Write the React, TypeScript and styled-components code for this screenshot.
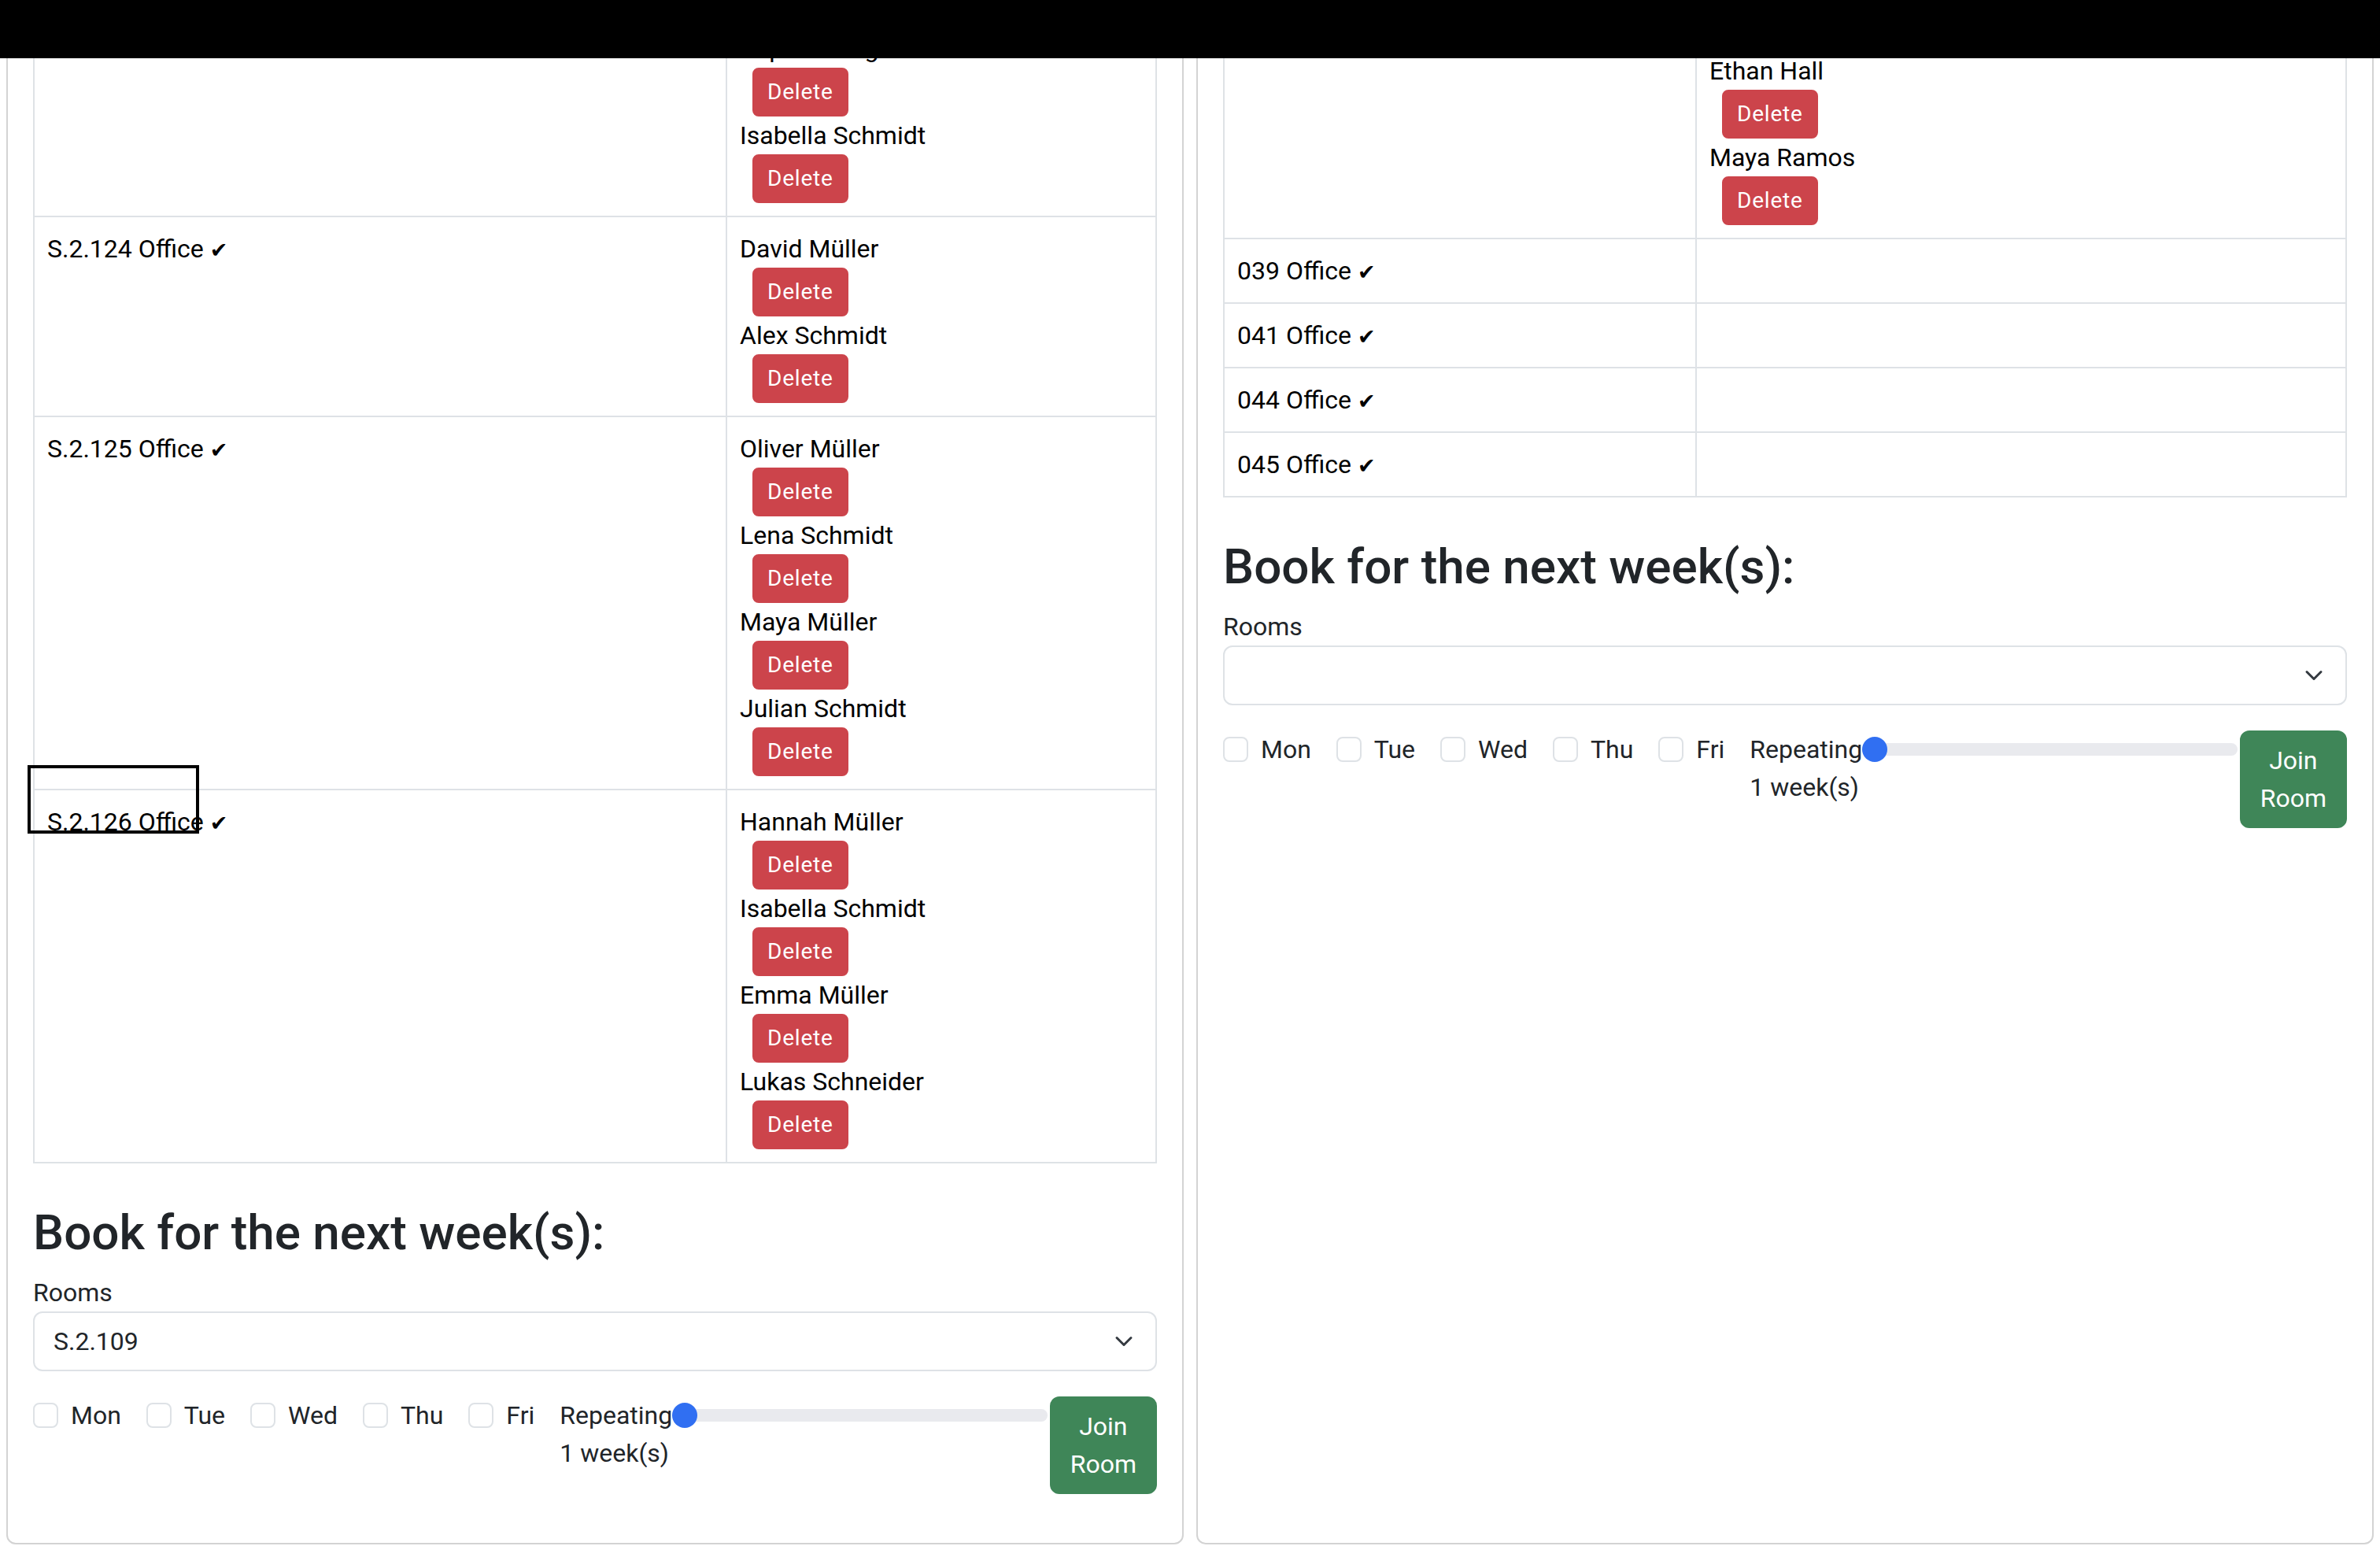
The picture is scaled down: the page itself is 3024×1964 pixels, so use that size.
import React from "react";
import styled, { createGlobalStyle } from "styled-components";

type Room = { name: string; people: string[] };

const leftRooms: Room[] = [
  { name: "S.2.122 Office", people: [] },
  { name: "S.2.123 Office", people: ["Lukas Wagner", "Sophie Jung", "Isabella Schmidt"] },
  { name: "S.2.124 Office", people: ["David Müller", "Alex Schmidt"] },
  {
    name: "S.2.125 Office",
    people: ["Oliver Müller", "Lena Schmidt", "Maya Müller", "Julian Schmidt"]
  },
  {
    name: "S.2.126 Office",
    people: ["Hannah Müller", "Isabella Schmidt", "Emma Müller", "Lukas Schneider"]
  }
];

const rightRooms: Room[] = [
  { name: "038 Office", people: ["Noah Becker", "Lea Fischer", "Ethan Hall", "Maya Ramos"] },
  { name: "039 Office", people: [] },
  { name: "041 Office", people: [] },
  { name: "044 Office", people: [] },
  { name: "045 Office", people: [] }
];

const days = ["Mon", "Tue", "Wed", "Thu", "Fri"];

const GlobalStyle = createGlobalStyle`
  * { box-sizing: border-box; }
  html, body {
    margin: 0;
    padding: 0;
    overflow: hidden;
    background: #fff;
  }
  body {
    font-family: Roboto, "Liberation Sans", Arial, sans-serif;
    font-size: 32px;
    line-height: 1.5;
    color: #212529;
  }
`;

const Screen = styled.div`
  display: flex;
  flex-direction: column;
  height: 100vh;
`;

const TopBar = styled.div`
  flex: 0 0 74px;
  background: #000;
`;

// the page is scrolled down, the viewport only shows part of it
const Viewport = styled.div`
  flex: 1;
  min-height: 0;
  overflow: hidden;
`;

const Page = styled.div<{ $scroll: number }>`
  display: flex;
  align-items: stretch;
  margin-top: ${({ $scroll }) => -$scroll}px;
`;

const Column = styled.div`
  flex: 1 1 0;
  min-width: 0;
  padding: 0 8px;
  display: flex;
  flex-direction: column;
`;

const Card = styled.div`
  flex: 1;
  border: 2px solid #d3d3d3;
  border-radius: 12px;
  padding: 32px;
  background: #fff;
`;

const RoomTable = styled.table`
  width: 100%;
  border-collapse: collapse;
  table-layout: fixed;
  margin-bottom: 47px;
  color: #000;
`;

const Col = styled.col<{ $width?: number }>`
  width: ${({ $width }) => ($width ? `${$width}px` : "auto")};
`;

const Cell = styled.td`
  position: relative;
  border: 2px solid #dee2e6;
  padding: 16px;
  vertical-align: top;
`;

const CheckMark = styled.span`
  font-family: "DejaVu Sans", sans-serif;
  font-size: 27px;
`;

const PersonList = styled.div`
  display: flex;
  flex-direction: column;
  align-items: flex-start;
`;

const PersonName = styled.div`
  line-height: 48px;
`;

const DeleteButton = styled.button`
  margin-left: 16px;
  padding: 8px 17px;
  font-family: inherit;
  font-size: 28px;
  letter-spacing: 0.8px;
  line-height: 42px;
  color: #fff;
  background: #cc444b;
  border: 2px solid #cc444b;
  border-radius: 8px;
`;

const DragMarker = styled.div`
  position: absolute;
  top: -32px;
  left: -9px;
  width: 218px;
  height: 87px;
  border: 4px solid #000;
  pointer-events: none;
`;

const Heading = styled.h2`
  margin: 0 0 13px;
  padding-top: 3px;
  font-size: 62px;
  font-weight: 500;
  line-height: 76.8px;
  color: #212529;
`;

const FieldLabel = styled.label`
  display: block;
  line-height: 48px;
`;

const SelectBox = styled.div`
  height: 76px;
  margin-bottom: 32px;
  padding: 0 24px;
  display: flex;
  align-items: center;
  justify-content: space-between;
  border: 2px solid #dee2e6;
  border-radius: 12px;
  color: #212529;
`;

const Chevron = styled.svg`
  margin-right: 4px;
  flex-shrink: 0;
`;

const FormRow = styled.div`
  display: flex;
  align-items: flex-start;
  margin-bottom: 30px;
`;

const DayCheck = styled.label`
  display: flex;
  align-items: flex-start;
  gap: 16px;
  margin-right: 32px;
  line-height: 48px;
  white-space: nowrap;
`;

const DayBox = styled.input`
  appearance: none;
  -webkit-appearance: none;
  width: 32px;
  height: 32px;
  margin: 8px 0 0;
  flex-shrink: 0;
  border: 2px solid #dee2e6;
  border-radius: 8px;
  background: #fff;
`;

const Repeat = styled.div`
  flex: 1;
  min-width: 0;
  display: flex;
  flex-direction: column;
`;

const RepeatLine = styled.div`
  display: flex;
  align-items: center;
  height: 48px;
  white-space: nowrap;
`;

const WeeksText = styled.div`
  line-height: 48px;
`;

const Range = styled.input`
  -webkit-appearance: none;
  appearance: none;
  flex: 1;
  min-width: 0;
  height: 32px;
  margin: 0;
  padding: 0;
  background: transparent;

  &::-webkit-slider-runnable-track {
    height: 16px;
    border-radius: 16px;
    background: #e9eaee;
  }

  &::-webkit-slider-thumb {
    -webkit-appearance: none;
    width: 32px;
    height: 32px;
    margin-top: -8px;
    border: 0;
    border-radius: 50%;
    background: #306ff2;
  }
`;

const JoinButton = styled.button`
  width: min-content;
  margin-left: 3px;
  padding: 12px 24px;
  font-family: inherit;
  font-size: 32px;
  line-height: 48px;
  text-align: center;
  color: #fff;
  background: #3f8658;
  border: 2px solid #3f8658;
  border-radius: 12px;
`;

function Rooms({ rooms, firstCol, marked }: { rooms: Room[]; firstCol: number; marked?: string }) {
  return (
    <RoomTable>
      <colgroup>
        <Col $width={firstCol} />
        <Col />
      </colgroup>
      <tbody>
        {rooms.map((room) => (
          <tr key={room.name}>
            <Cell>
              {room.name} <CheckMark>✔</CheckMark>
              {marked === room.name && <DragMarker />}
            </Cell>
            <Cell>
              <PersonList>
                {room.people.map((p, i) => (
                  <React.Fragment key={p + i}>
                    <PersonName>{p}</PersonName>
                    <DeleteButton>Delete</DeleteButton>
                  </React.Fragment>
                ))}
              </PersonList>
            </Cell>
          </tr>
        ))}
      </tbody>
    </RoomTable>
  );
}

function BookingForm({ selected }: { selected: string }) {
  return (
    <>
      <Heading>Book for the next week(s):</Heading>
      <FieldLabel>Rooms</FieldLabel>
      <SelectBox>
        <span>{selected}</span>
        <Chevron width="24" height="24" viewBox="0 0 16 16">
          <path
            d="m2 5 6 6 6-6"
            fill="none"
            stroke="#343a40"
            strokeWidth="2"
            strokeLinecap="round"
            strokeLinejoin="round"
          />
        </Chevron>
      </SelectBox>
      <FormRow>
        {days.map((d) => (
          <DayCheck key={d}>
            <DayBox type="checkbox" />
            {d}
          </DayCheck>
        ))}
        <Repeat>
          <RepeatLine>
            Repeating
            <Range type="range" min={1} max={10} defaultValue={1} />
          </RepeatLine>
          <WeeksText>1 week(s)</WeeksText>
        </Repeat>
        <JoinButton>Join Room</JoinButton>
      </FormRow>
    </>
  );
}

export default function App() {
  return (
    <Screen>
      <GlobalStyle />
      <TopBar />
      <Viewport>
        <Page $scroll={280}>
          <Column>
            <Card>
              <Rooms rooms={leftRooms} firstCol={880} marked="S.2.126 Office" />
              <BookingForm selected="S.2.109" />
            </Card>
          </Column>
          <Column>
            <Card>
              <Rooms rooms={rightRooms} firstCol={600} />
              <BookingForm selected="" />
            </Card>
          </Column>
        </Page>
      </Viewport>
    </Screen>
  );
}
